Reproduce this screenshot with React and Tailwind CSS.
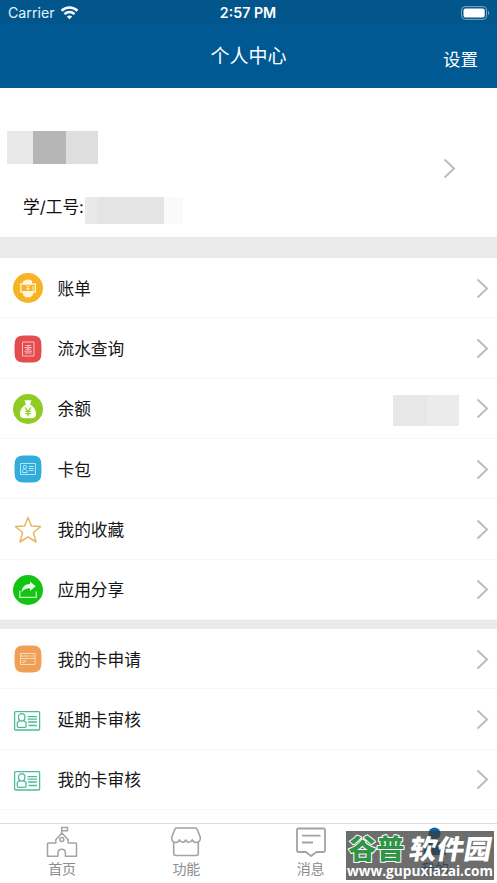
import React from 'react';

const Chevron = ({ className = '' }) => (
    <svg className={`w-[13px] h-[21px] shrink-0 ${className}`} viewBox="0 0 13 21" fill="none" stroke="#bcbcbc" strokeWidth="2">
        <path d="M1.500 1.500l9.500 9-9.500 9" />
    </svg>
);

const BillIcon = () => (
    <svg className="w-[30px] h-[30px]" viewBox="0 0 30 30">
        <circle cx="15" cy="15" r="15" fill="#f6b324" />
        <path d="M10 11V8.300l1.800-.9 1.400-1 1.200.5 1.200-.7 1.200.8 1.700.3.500 1.200V11z" fill="#fff5dd" />
        <path d="M7.800 11h14.500v8H7.800z" fill="#f6b324" stroke="#fff5dd" strokeWidth="1.300" />
        <path d="M9.500 18.300h11c0 3.700-2 6-4 6h-3c-2.200 0-4-2.300-4-6z" fill="#fff5dd" />
        <path d="M13.300 12.300l1.700 2 1.700-2M15 14.300v3.500M13.500 15.500h3M20 13v5" fill="none" stroke="#fff5dd" strokeWidth=".9" />
    </svg>
);

const FlowIcon = () => (
    <svg className="w-[30px] h-[30px]" viewBox="0 0 30 30">
        <path d="M15 1.500c3.500 0 6 .1 8.200.6 2.500.6 4.100 2.200 4.700 4.700.5 2.200.6 4.700.6 8.200s-.1 6-.6 8.200c-.6 2.500-2.200 4.100-4.700 4.700-2.200.5-4.700.6-8.200.6s-6-.1-8.200-.6c-2.500-.6-4.100-2.200-4.700-4.700-.5-2.200-.6-4.700-.6-8.200s.1-6 .6-8.200c.6-2.500 2.200-4.100 4.700-4.700 2.200-.5 4.700-.6 8.200-.6z" fill="#e44c50" />
        <path d="M9.500 8h11.500v14h-11.500z" fill="none" stroke="#f8c0c2" strokeWidth="1" />
        <path d="M12.500 11.500h5.500M11.500 13.500h7.500M12.500 15.300h5.500M11.500 17.200h7.500M12 19h6.500M15.200 11v5" stroke="#f8c0c2" strokeWidth="1" />
    </svg>
);

const BalanceIcon = () => (
    <svg className="w-[30px] h-[30px]" viewBox="0 0 30 30">
        <circle cx="15" cy="15" r="15" fill="#8fcb22" />
        <path d="M11.500 6l2 .6 1.500-.7 1.500.7 2-.6-1.400 4.400c3.200 1.500 6 5.600 6 9.400 0 3.200-1.600 4.500-4.300 4.500h-7.600c-2.700 0-4.300-1.300-4.300-4.500 0-3.800 2.800-7.900 6-9.400z" fill="#fbfff0" />
        <path d="M12 13.500l3 3.800 3-3.800M15 17.300v4.900M12.300 17.400h5.400M12.300 19.600h5.400" fill="none" stroke="#8fcb22" strokeWidth="1.200" />
    </svg>
);

const WalletIcon = () => (
    <svg className="w-[30px] h-[30px]" viewBox="0 0 30 30">
        <path d="M15 1.500c3.500 0 6 .1 8.200.6 2.500.6 4.100 2.200 4.700 4.700.5 2.200.6 4.700.6 8.200s-.1 6-.6 8.200c-.6 2.500-2.200 4.100-4.700 4.700-2.200.5-4.700.6-8.200.6s-6-.1-8.200-.6c-2.500-.6-4.100-2.200-4.700-4.700-.5-2.200-.6-4.700-.6-8.200s.1-6 .6-8.200c.6-2.500 2.200-4.100 4.700-4.700 2.200-.5 4.700-.6 8.200-.6z" fill="#31acdb" />
        <g fill="none" stroke="#b5e5f6" strokeWidth="1">
            <path d="M7.500 9.500h15v11h-15z" />
            <circle cx="11.700" cy="13" r="1.700" />
            <path d="M9.500 18.500v-2l1.500-1.300h1.500l1.500 1.300v2zM15.700 12.500h5M15.700 14.500h5M15.700 16.500h5" />
        </g>
    </svg>
);

const StarIcon = () => (
    <svg className="w-[30px] h-[30px]" viewBox="0 0 30 30" fill="none" stroke="#e8b860" strokeWidth="1.500" strokeLinejoin="round">
        <path d="M15 2.500l3.500 8.600 9 .5-7 5.900 2.500 9.500-8-5.200-8 5.200 2.500-9.500-7-5.900 9-.5z" />
    </svg>
);

const ShareIcon = () => (
    <svg className="w-[30px] h-[30px]" viewBox="0 0 30 30">
        <circle cx="15" cy="15" r="15" fill="#13c413" />
        <path d="M6.800 15.800v6.500h16.500V16.500" fill="none" stroke="#c9f5c7" strokeWidth="1.300" />
        <path d="M8.500 17.500c.2-5.200 3.500-8.500 8.500-8.500V6.500l5.700 4.700-5.700 4.800v-2.800c-3.800 0-6.500 1.300-8.500 4.300z" fill="#e6fbe5" />
    </svg>
);

const ApplyIcon = () => (
    <svg className="w-[30px] h-[30px]" viewBox="0 0 30 30">
        <path d="M15 1.500c3.500 0 6 .1 8.200.6 2.500.6 4.100 2.200 4.700 4.700.5 2.200.6 4.700.6 8.200s-.1 6-.6 8.200c-.6 2.500-2.200 4.100-4.700 4.700-2.200.5-4.700.6-8.200.6s-6-.1-8.200-.6c-2.500-.6-4.100-2.200-4.700-4.700-.5-2.200-.6-4.700-.6-8.200s.1-6 .6-8.200c.6-2.500 2.200-4.100 4.700-4.700 2.200-.5 4.700-.6 8.200-.6z" fill="#f0a056" />
        <g fill="none" stroke="#fbdcb9" strokeWidth="1">
            <path d="M7.500 9.500h14.500v11H7.500z" />
            <path d="M7.500 12h9M7.500 14.500h14.500M9.500 17h4M9.500 18.500h2M18 12h2.500" />
        </g>
    </svg>
);

const AuditIcon = () => (
    <svg className="w-[30px] h-[30px]" viewBox="0 0 30 30" fill="none" stroke="#4dba9b" strokeWidth="1.300">
        <rect x="1.600" y="6.700" width="25" height="18.300" rx="1" />
        <path d="M8.700 8.700c2 0 3.200 1.400 3.200 3.500s-1.200 3.800-3.200 3.800-3.200-1.700-3.200-3.800 1.200-3.500 3.200-3.500zM6.800 15.500l-2.500 2v3.800c0 .7.400 1 1 1h6.700c.7 0 1.100-.3 1.100-1v-3.800l-2.500-2" />
        <path d="M14.500 11.700H24M14.500 14.200H24M15 17H24M15.500 20.500H24" />
    </svg>
);

const HomeIcon = () => (
    <svg className="w-8 h-8" viewBox="0 0 32 32" fill="none" stroke="#a3a3a3" strokeWidth="1.500" strokeLinejoin="round">
        <path d="M15.700 7V1.500H21.500v3.300h-5.800M9.800 17H2.500c-.6 0-1 .4-1 1v12.300h10.500v-3.500c0-2.500 1.500-3.600 3.700-3.600s3.700 1.100 3.700 3.600v3.500H30.500V18c0-.6-.4-1-1-1h-7.300v-3.200L15.900 7l-6.100 6.800z" />
        <circle cx="15.800" cy="13.500" r="2" />
    </svg>
);

const ShopIcon = () => (
    <svg className="w-8 h-8" viewBox="0 0 32 32" fill="none" stroke="#a3a3a3" strokeWidth="1.600" strokeLinejoin="round">
        <path d="M6.500 2c-.8 0-1.200.4-1.500 1L1.800 11c-.7 3.500 1 5.500 3.700 5.500 1.900 0 3.200-1 4-2.700.8 1.500 1.800 2.500 3.100 2.500s2.400-1 3.200-2.300c.8 1.300 1.800 2.300 3.100 2.300s2.500-1 3.300-2.500c.8 1.700 2 2.700 4.200 2.700 2.700 0 4.500-2 3.800-5.500L27 3c-.3-.6-.7-1-1.500-1z" />
        <path d="M3.700 16v11.500c0 1.300.7 2 2 2h20.600c1.300 0 2-.7 2-2V16" />
    </svg>
);

const MessageIcon = () => (
    <svg className="w-8 h-8" viewBox="0 0 32 32" fill="none" stroke="#a3a3a3" strokeWidth="1.800" strokeLinejoin="round">
        <path d="M3.500 2.500h25c1 0 1.500.5 1.500 1.500v20.500c0 1-.5 1.500-1.500 1.500h-7L16 30l-5-4H3.500C2.500 26 2 25.500 2 24.500V4c0-1 .5-1.500 1.500-1.500z" />
        <path d="M7 9.700h18.500M7 16.500h11" />
    </svg>
);

const MineIcon = () => (
    <svg className="w-8 h-8" viewBox="0 0 32 32" fill="#0a66a8">
        <circle cx="15.500" cy="7.500" r="6" />
        <path d="M4.500 29c0-9 3-13.500 11-13.500S27 20 27 29z" />
    </svg>
);

const accountRows = [
    { label: '账单', icon: BillIcon },
    { label: '流水查询', icon: FlowIcon },
    { label: '余额', icon: BalanceIcon, masked: true },
    { label: '卡包', icon: WalletIcon },
    { label: '我的收藏', icon: StarIcon },
    { label: '应用分享', icon: ShareIcon },
];

const cardRows = [
    { label: '我的卡申请', icon: ApplyIcon },
    { label: '延期卡审核', icon: AuditIcon },
    { label: '我的卡审核', icon: AuditIcon },
];

const tabs = [
    { label: '首页', icon: HomeIcon },
    { label: '功能', icon: ShopIcon },
    { label: '消息', icon: MessageIcon },
    { label: '我的', icon: MineIcon, active: true },
];

const Row = ({ label, icon: Icon, masked }) => (
    <li className="h-[60.35px] flex items-center pt-px pl-[13px] pr-[8px] border-b border-[#f8f8f8]">
        <Icon />
        <span className="ml-[14.500px] mt-px text-[16.700px] leading-6 text-[#161616]">{label}</span>
        <div className="ml-auto flex items-center">
            {masked && (
                <div className="flex h-[31px] mt-[3px] mr-[17px]">
                    <div className="w-[34px] bg-[#e7e7e7]" />
                    <div className="w-[32px] bg-[#ebebeb]" />
                </div>
            )}
            <Chevron />
        </div>
    </li>
);

const App = () => {
    return (
        <div className="relative w-full h-[883px] overflow-hidden bg-white flex flex-col font-['Inter','Noto_Sans_CJK_SC',sans-serif]">
            <header className="h-[88px] shrink-0 bg-[#005993] text-white">
                <div className="h-6 bg-[#02568b] grid grid-cols-3 items-center pl-[8px] pr-[7px] pt-[2px]">
                    <div className="flex items-center gap-[5px] text-[14.200px] leading-5 text-[#e6f4fb]">
                        Carrier
                        <svg className="w-[19px] h-[14px] -mt-px" viewBox="0 0 18 14" fill="none" stroke="#fff" strokeWidth="2.600">
                            <path d="M1 4.700c4.600-4.300 11.400-4.300 16 0M4 8.100c3-2.700 7-2.700 10 0" />
                            <path d="M9 13.300l-2.700-2.800c1.500-1.400 3.900-1.400 5.400 0z" fill="#fff" stroke="none" />
                        </svg>
                    </div>
                    <div className="-ml-[2px] text-center text-[14.200px] leading-5 font-semibold">2:57 PM</div>
                    <svg className="justify-self-end w-[29px] h-[14px] -mt-px" viewBox="0 0 29 14">
                        <rect x=".6" y=".6" width="25" height="12.800" rx="3.500" fill="none" stroke="#79a7c5" />
                        <rect x="2.500" y="2.500" width="21.200" height="9" rx="2" fill="#fff" />
                        <path d="M27 4.800c1.600.8 1.600 3.600 0 4.400z" fill="#79a7c5" />
                    </svg>
                </div>
                <div className="h-16 grid grid-cols-3 items-center">
                    <h1 className="col-start-2 mt-[2px] text-center text-[19px] leading-7 font-normal">个人中心</h1>
                    <button className="justify-self-end mr-[19px] mt-[7px] text-[17.500px] leading-7">设置</button>
                </div>
            </header>

            <section className="h-[149px] shrink-0 flex items-start pt-[43px] pr-[41px]">
                <div>
                    <div className="flex h-[33px] ml-[7px]">
                        <div className="w-[26px] bg-[#e9e9e9]" />
                        <div className="w-[33px] bg-[#b6b6b6]" />
                        <div className="w-[32px] bg-[#dedede]" />
                    </div>
                    <div className="flex items-start mt-[32px]">
                        <span className="ml-[23px] mt-px w-[62px] text-[16.700px] leading-[20px] text-[#111] whitespace-nowrap">学/工号:</span>
                        <div className="flex h-[27px] mt-[1px]">
                            <div className="w-[13px] bg-[#e9e9e9]" />
                            <div className="w-[66px] bg-[#e4e4e4]" />
                            <div className="w-[19px] bg-[#fafafa]" />
                        </div>
                    </div>
                </div>
                <Chevron className="ml-auto mt-[27px]" />
            </section>

            <div className="h-[21px] shrink-0 bg-[#eaeaea]" />
            <ul className="shrink-0">
                {accountRows.map((row) => (
                    <Row key={row.label} {...row} />
                ))}
            </ul>
            <div className="h-[9px] shrink-0 bg-[#eaeaea]" />
            <ul className="shrink-0">
                {cardRows.map((row) => (
                    <Row key={row.label} {...row} />
                ))}
            </ul>

            <nav className="mt-auto h-[60px] shrink-0 border-t border-[#dcdcdc] bg-white grid grid-cols-4">
                {tabs.map(({ label, icon: Icon, active }) => (
                    <a key={label} className={`flex flex-col items-center pt-[2px] text-[14px] ${active ? 'text-[#0a66a8]' : 'text-[#8c8c8c]'}`}>
                        <Icon />
                        <span className="mt-px leading-[20px]">{label}</span>
                    </a>
                ))}
            </nav>

            <div className="absolute left-[346px] top-[831px] w-[148px] h-[49px] bg-[#3c3c3c]/75">
                <svg className="w-[148px] h-[49px] overflow-visible" viewBox="0 0 148 49">
                    <g fontFamily="'Noto Sans CJK SC', sans-serif" fontWeight="900" fontSize="27" strokeLinejoin="round">
                        <text x="2.500" y="28" textLength="56" lengthAdjust="spacingAndGlyphs" fill="#2f9445" stroke="#fff" strokeWidth="2" paintOrder="stroke">谷普</text>
                        <text x="67" y="28" textLength="82" lengthAdjust="spacingAndGlyphs" fill="#fff" transform="skewX(-10)">软件园</text>
                    </g>
                    <text x="1" y="45" textLength="146" lengthAdjust="spacingAndGlyphs" fill="#fff" fontFamily="'Open Sans', sans-serif" fontWeight="700" fontSize="15">www.gupuxiazai.com</text>
                </svg>
            </div>
        </div>
    );
};

export default App;
